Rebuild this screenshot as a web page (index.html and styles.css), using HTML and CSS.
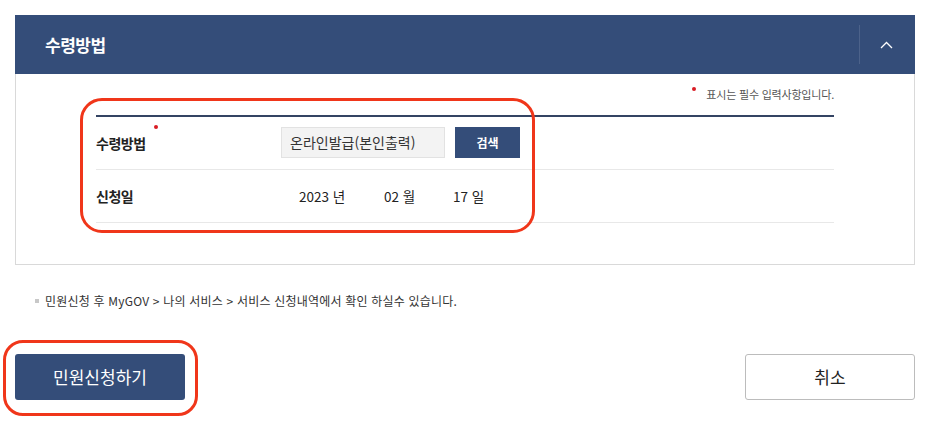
FILE: index.html
```html
<!DOCTYPE html>
<html lang="ko">
<head>
    <meta charset="UTF-8">
    <meta name="viewport" content="width=device-width, initial-scale=1.0">
    <title>수령방법</title>
    <link rel="stylesheet" href="styles.css">
</head>
<body>
    <div class="page">
        <!-- 수령방법 section -->
        <div class="section-head">
            <h2>수령방법</h2>
            <button class="toggle" aria-label="접기">
                <svg width="13" height="8" viewBox="0 0 13 8"><path d="M1 7 L6.5 1.5 L12 7" fill="none" stroke="#fff" stroke-width="1.3"/></svg>
            </button>
        </div>
        <div class="section-body">
            <p class="req-note"><span class="dot"></span>표시는 필수 입력사항입니다.</p>
            <table class="form-table">
                <tr>
                    <th>수령방법<span class="dot"></span></th>
                    <td>
                        <span class="field">온라인발급(본인출력)</span>
                        <button class="btn-search">검색</button>
                    </td>
                </tr>
                <tr>
                    <th>신청일</th>
                    <td>
                        <div class="date">
                            <span class="y">2023 년</span>
                            <span class="m">02 월</span>
                            <span class="d">17 일</span>
                        </div>
                    </td>
                </tr>
            </table>
        </div>

        <p class="info">민원신청 후 MyGOV &gt; 나의 서비스 &gt; 서비스 신청내역에서 확인 하실수 있습니다.</p>

        <div class="actions">
            <button class="btn-primary">민원신청하기</button>
            <button class="btn-cancel">취소</button>
        </div>

        <!-- annotation marks -->
        <div class="mark mark-form"></div>
        <div class="mark mark-submit"></div>
    </div>
</body>
</html>
```

FILE: styles.css
```css
/* General */
* {
    box-sizing: border-box;
    margin: 0;
    padding: 0;
}
html, body {
    height: 100%;
}
body {
    font-family: "Noto Sans CJK KR", "Noto Sans", sans-serif;
    color: #222;
    background: #fff;
}
.page {
    position: relative;
    min-height: 100%;
    padding: 15px 14px 0 15px;
}

/* Section header */
.section-head {
    display: flex;
    align-items: center;
    height: 59px;
    background-color: #344d79;
    color: #fff;
}
.section-head h2 {
    flex: 1;
    padding-left: 30px;
    font-size: 17px;
    font-weight: bold;
    letter-spacing: -0.5px;
}
.toggle {
    display: flex;
    align-items: center;
    justify-content: center;
    width: 56px;
    height: 39px;
    padding-right: 3px;
    border: none;
    border-left: 1px solid #4c628a;
    background: transparent;
}

/* Section body */
.section-body {
    border: 1px solid #d9d9d9;
    border-top: none;
    padding: 12px 80px 41px 80px;
}
.req-note {
    text-align: right;
    font-size: 11px;
    color: #555;
    letter-spacing: -0.2px;
    height: 29px;
    line-height: 16px;
}
.dot {
    display: inline-block;
    width: 4px;
    height: 4px;
    border-radius: 50%;
    background-color: #d91c24;
    vertical-align: top;
}
.req-note .dot {
    margin: 1px 10px 0 0;
}

/* Form table */
.form-table {
    width: 100%;
    border-collapse: collapse;
    border-top: 2px solid #344463;
}
.form-table tr {
    height: 53px;
    border-bottom: 1px solid #e8e8e8;
}
.form-table th {
    width: 185px;
    text-align: left;
    font-size: 14px;
    font-weight: bold;
    letter-spacing: -0.5px;
    vertical-align: middle;
}
.form-table th .dot {
    margin: -8px 0 0 8px;
}
.form-table td {
    vertical-align: middle;
    font-size: 0;
}
.field {
    display: inline-block;
    width: 164px;
    height: 31px;
    line-height: 29px;
    padding-left: 8px;
    border: 1px solid #e2e2e2;
    background-color: #f3f3f3;
    font-size: 14px;
    color: #333;
    vertical-align: middle;
}
.btn-search {
    width: 65px;
    height: 31px;
    margin-left: 10px;
    border: none;
    background-color: #344d79;
    color: #fff;
    font-family: inherit;
    font-size: 12px;
    font-weight: bold;
    vertical-align: middle;
}
.date {
    display: flex;
    padding-left: 18px;
    font-size: 13.5px;
    color: #222;
}
.date .y { width: 85px; }
.date .m { width: 69px; }

/* Info line */
.info {
    margin: 27px 0 0 20px;
    font-size: 12px;
    color: #333;
    letter-spacing: 0.2px;
    line-height: 17px;
}
.info::before {
    content: "";
    display: inline-block;
    width: 4px;
    height: 4px;
    margin: 0 6px 2px 0;
    background-color: #c8c8c8;
    vertical-align: middle;
}

/* Buttons */
.actions {
    display: flex;
    justify-content: space-between;
    margin-top: 45px;
}
.actions button {
    width: 170px;
    height: 46px;
    border-radius: 3px;
    font-family: inherit;
    font-size: 17px;
}
.btn-primary {
    border: none;
    background-color: #344d79;
    color: #fff;
}
.btn-cancel {
    border: 1px solid #bcbcbc;
    background-color: #fff;
    color: #222;
    font-size: 16px;
}

/* Red annotation marks */
.mark {
    position: absolute;
    border: 3px solid #f0361a;
    pointer-events: none;
}
.mark-form {
    left: 80px;
    top: 98px;
    width: 455px;
    height: 135px;
    border-radius: 22px;
}
.mark-submit {
    left: 3px;
    top: 340px;
    width: 195px;
    height: 76px;
    border-radius: 20px;
}
```
